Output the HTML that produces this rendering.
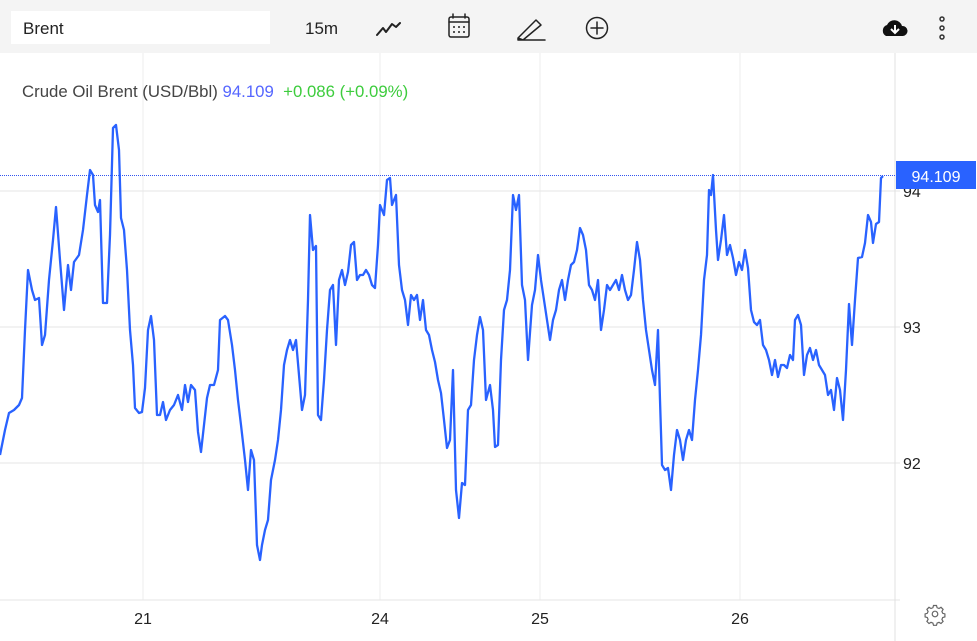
<!DOCTYPE html><html><head><style>
body{margin:0;width:977px;height:641px;overflow:hidden;background:#fff;font-family:"Liberation Sans",Arial,sans-serif;position:relative}
.tb{position:absolute;left:0;top:0;width:977px;height:53px;background:#f4f4f4}
.in{position:absolute;left:11px;top:11px;width:259px;height:33px;background:#fff;font-size:17px;line-height:35px;color:#222;text-indent:12px}
.t{position:absolute;color:#222}
</style></head><body>
<div class="tb"></div>
<div class="in">Brent</div>
<div class="t" style="left:305px;top:19px;font-size:17px">15m</div>
<svg width="977" height="641" style="position:absolute;left:0;top:0">
<g fill="none" stroke="#222" stroke-width="2" stroke-linecap="round" stroke-linejoin="round">
<path d="M377 35 L383 28 L386 32 L392 24 L396 27 L400 23"/>
<rect x="449" y="17" width="20" height="20" rx="2" stroke-width="1.5"/>
<path d="M449 22 H469 M453 14 V18 M465 14 V18" stroke-width="1.5"/>
<path d="M518 38 L536 20 L541 25 L523 40 Z M518 38 V40 H545" stroke-width="1.5"/>
<circle cx="597" cy="28" r="10.5" stroke-width="1.5"/><path d="M597 22 V34 M591 28 H603" stroke-width="1.5"/>
</g>
<g fill="#222"><circle cx="454" cy="27" r="1"/><circle cx="459" cy="27" r="1"/><circle cx="464" cy="27" r="1"/><circle cx="454" cy="32" r="1"/><circle cx="459" cy="32" r="1"/><circle cx="464" cy="32" r="1"/></g>
<path d="M886 36 a6 6 0 0 1 1 -11 a8 8 0 0 1 15 1 a5 5 0 0 1 1 10 Z" fill="#111"/>
<path d="M895 25 V32 M891 29 L895 33 L899 29" stroke="#fff" stroke-width="2" fill="none"/>
<g fill="none" stroke="#333" stroke-width="1.5"><circle cx="942" cy="19" r="2"/><circle cx="942" cy="28" r="2"/><circle cx="942" cy="37" r="2"/></g>
<g stroke="#eee" stroke-width="1">
<path d="M143 53 V600 M380 53 V600 M540 53 V600 M740 53 V600"/>
<path d="M0 191 H900 M0 327 H900 M0 463 H900 M0 600 H900" stroke="#e6e6e6"/>
</g>
<path d="M895 53 V641" stroke="#e0e0e0"/>
<path d="M0 175.5 H895" stroke="#3355ee" stroke-dasharray="1 1"/>
<polyline fill="none" stroke="#2962ff" stroke-width="2.3" stroke-linejoin="round" points="0,455 5,430 9,413 14,410 19,405 22,398 25,330 28,270 32,290 35,300 39,298 42,345 45,335 49,280 53,240 56,207 60,260 64,310 68,265 71,290 74,262 79,255 83,230 87,195 90,170 93,175 95,205 98,212 100,200 103,303 107,303 110,235 113,128 116,125 119,150 121,218 124,230 127,270 130,330 133,365 135,408 139,413 142,412 145,388 148,330 151,316 154,340 157,415 160,415 163,402 166,420 170,410 174,405 178,395 182,410 185,385 188,402 191,385 195,390 198,432 201,452 204,425 207,398 210,385 214,385 218,370 220,320 225,316 228,320 232,345 235,370 238,400 241,425 245,460 248,490 251,450 254,460 257,545 260,560 262,545 265,530 268,520 271,480 275,460 278,440 281,410 284,365 287,350 290,340 293,350 296,340 299,375 302,410 305,395 308,300 310,215 313,250 316,246 318,415 321,420 324,380 327,330 330,290 333,285 336,345 339,280 342,270 345,285 348,272 351,245 354,242 357,280 360,275 363,275 366,270 369,275 372,285 375,288 378,245 380,205 384,215 387,180 390,178 392,205 396,195 399,265 402,290 405,300 408,325 411,295 414,300 417,295 420,320 423,300 426,330 429,335 432,350 435,362 438,380 441,393 444,420 447,448 450,440 453,370 456,490 459,518 462,483 465,485 468,410 471,405 474,360 477,335 480,317 483,330 486,400 490,385 493,410 495,447 498,445 501,360 504,310 507,300 510,270 513,195 516,210 519,195 522,285 525,300 528,360 532,305 535,290 538,255 541,280 544,300 547,320 550,340 553,320 556,310 559,290 562,280 565,300 568,280 571,265 574,262 577,250 580,228 583,235 586,250 589,285 592,290 595,300 598,280 601,330 604,310 607,285 610,290 613,285 616,280 619,290 622,275 625,290 628,300 631,295 634,270 637,242 640,260 643,300 646,330 649,350 652,370 655,385 658,330 660,400 662,465 665,470 668,468 671,490 674,455 677,430 680,440 683,460 686,440 689,430 692,440 695,400 698,370 701,335 704,280 707,255 709,190 711,195 713,175 716,230 718,260 721,240 724,215 727,255 730,245 733,258 736,275 739,262 742,270 745,250 748,268 751,310 754,322 757,325 760,320 763,345 766,350 769,360 772,375 775,360 778,377 781,365 784,365 787,368 790,355 793,360 795,320 798,315 801,325 804,375 807,355 810,348 813,360 816,350 819,365 822,370 825,375 828,395 831,390 834,410 837,378 840,390 843,420 846,370 849,304 852,345 855,300 858,258 862,257 865,243 868,215 871,222 873,243 876,224 879,222 881,178 883,176"/>
<g font-size="16" fill="#222" font-family="Liberation Sans,sans-serif">
<text x="903" y="197">94</text>
</g>
<rect x="896" y="161" width="80" height="28" fill="#2962ff"/>
<text x="936" y="182" fill="#fff" font-size="16" text-anchor="middle" font-family="Liberation Sans,sans-serif">94.109</text>
<g font-size="16" fill="#222" font-family="Liberation Sans,sans-serif">
<text x="903" y="333">93</text><text x="903" y="469">92</text>
<text x="143" y="624" text-anchor="middle">21</text><text x="380" y="624" text-anchor="middle">24</text><text x="540" y="624" text-anchor="middle">25</text><text x="740" y="624" text-anchor="middle">26</text>
</g>
<g fill="none" stroke="#666" stroke-width="1.2">
<circle cx="935" cy="614" r="2.8"/>
<path d="M933.5 605.5 h3 l0.6 2.2 l1.9 0.8 l2 -1.2 l2.1 2.1 l-1.2 2 l0.8 1.9 l2.2 0.6 v3 l-2.2 0.6 l-0.8 1.9 l1.2 2 l-2.1 2.1 l-2 -1.2 l-1.9 0.8 l-0.6 2.2 h-3 l-0.6 -2.2 l-1.9 -0.8 l-2 1.2 l-2.1 -2.1 l1.2 -2 l-0.8 -1.9 l-2.2 -0.6 v-3 l2.2 -0.6 l0.8 -1.9 l-1.2 -2 l2.1 -2.1 l2 1.2 l1.9 -0.8 Z"/>
</g>
</svg>
<div class="t" style="left:22px;top:82px;font-size:16.8px;color:#444">Crude Oil Brent (USD/Bbl) <span style="color:#5566ff">94.109</span>&nbsp; <span style="color:#3dcc3d">+0.086 (+0.09%)</span></div>
</body></html>
